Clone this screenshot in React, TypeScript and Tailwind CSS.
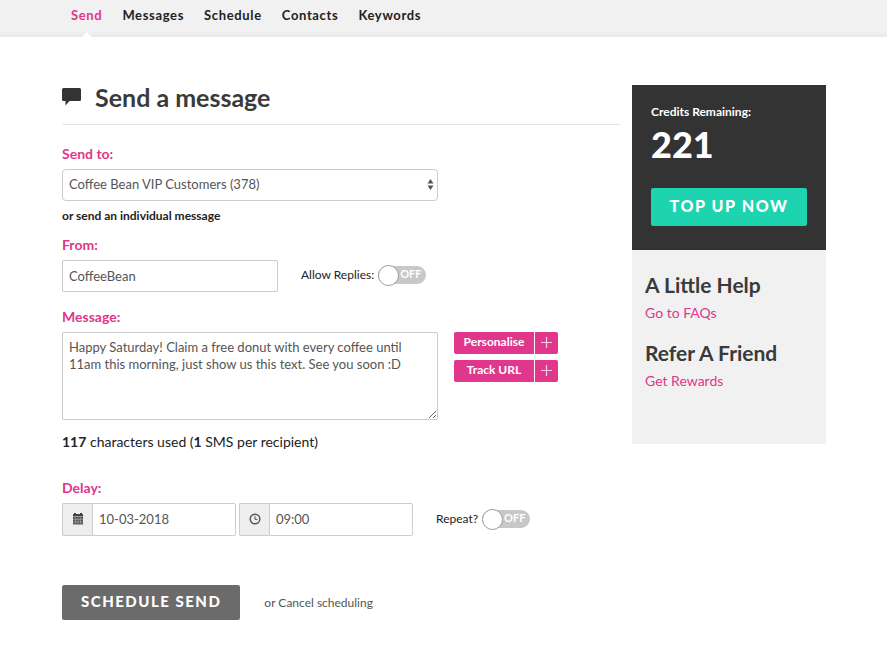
import { useState } from "react"

const NAV = ["Send", "Messages", "Schedule", "Contacts", "Keywords"]

const labelClass = "block pb-1.5 text-sm leading-[18px] font-bold text-[#e0368c]"
const fieldClass = "border border-[#cccccc] rounded-xs bg-white text-[13px] text-[#555555] focus:outline-none focus:border-[#e0368c]"

function Toggle({ id, label }: { id: string; label: string }) {
  const [on, setOn] = useState(false)
  return (
    <div className="flex items-center gap-1 pb-0.5">
      <label htmlFor={id} className="text-xs text-[#222222]">{label}</label>
      <div className="relative flex items-center w-12 h-5">
        <input id={id} type="checkbox" checked={on} onChange={e => setOn(e.target.checked)}
          className="peer appearance-none w-12 h-[18px] rounded-full bg-[#c8c8c8] checked:bg-[#1dd3b0] cursor-pointer" />
        <span className="absolute left-0 top-0 size-[21px] rounded-full bg-white border border-[#999999] pointer-events-none peer-checked:left-7" />
        <span className={`absolute top-0 ${on ? "left-2" : "left-[22px]"} text-[11px] leading-[18px] font-bold text-white pointer-events-none`}>
          {on ? "ON" : "OFF"}
        </span>
      </div>
    </div>
  )
}

function InsertButton({ text }: { text: string }) {
  return (
    <button type="button" className="flex gap-px h-[22px] text-xs font-bold text-white">
      <span className="w-20 h-full pb-0.5 flex items-center justify-center rounded-l-xs bg-[#e0368c]">{text}</span>
      <span className="w-[23px] h-full pb-0.5 flex items-center justify-center rounded-r-xs bg-[#e0368c]">
        <svg width="11" height="11" viewBox="0 0 11 11" stroke="#f8cfe3" strokeWidth="1.2">
          <path d="M5.5 0v11M0 5.5h11" />
        </svg>
      </span>
    </button>
  )
}

function CalendarIcon() {
  return (
    <svg width="12" height="12" viewBox="0 0 12 12">
      <path d="M1 1h1V0h2v1h4V0h2v1h1v2.5H1z" fill="#444" />
      <rect x="1" y="4" width="10" height="7.5" fill="#555" />
      <path d="M1 6.4h10M1 8.9h10M3.5 4.2v7.3M6 4.2v7.3M8.5 4.2v7.3" stroke="#bbb" strokeWidth=".5" />
    </svg>
  )
}

function ClockIcon() {
  return (
    <svg width="12" height="12" viewBox="0 0 12 12" fill="none" stroke="#555">
      <circle cx="6" cy="6" r="4.8" strokeWidth="1.4" />
      <path d="M6 3.2V6.4H8.4" strokeWidth="1" />
    </svg>
  )
}

export default function App() {
  const [message, setMessage] = useState(
    "Happy Saturday! Claim a free donut with every coffee until 11am this morning, just show us this text. See you soon :D"
  )

  return (
    <div className="min-h-screen bg-white font-[Lato,'Open_Sans',sans-serif] text-[#222222]">
      <header className="bg-[#f1f1f1] bg-linear-to-b from-[#f1f1f1] from-85% to-[#e8e8e8]">
        <nav className="flex gap-5 h-[37px] px-[71px]">
          {NAV.map((item, i) => (
            <a key={item} href="#"
              className={`relative pt-1.5 text-[13px] leading-[18px] font-bold tracking-wider ${i === 0 ? "text-[#e0368c]" : "text-[#222222]"}`}>
              {item}
              {i === 0 && (
                <svg className="absolute bottom-0 left-1/2 -translate-x-1/2" width="10" height="5" viewBox="0 0 10 5">
                  <path d="M0 5L5 0l5 5z" fill="#fff" />
                </svg>
              )}
            </a>
          ))}
        </nav>
      </header>

      <div className="flex items-start gap-3 pl-[62px] pr-[61px] pt-12 pb-12">
        <main className="flex-1 min-w-0">
          <div className="flex items-center gap-3.5 pb-[15px] border-b border-[#e5e5e5]">
            <svg width="19" height="18" viewBox="0 0 19 18" fill="#333">
              <path d="M1.5 0h16A1.5 1.5 0 0 1 19 1.5v10a1.5 1.5 0 0 1-1.5 1.5H7.5L3.500 17.500V13h-2A1.500 1.500 0 0 1 0 11.500v-10A1.500 1.500 0 0 1 1.500 0z" />
            </svg>
            <h1 className="text-[25px] leading-6 font-bold text-[#3a3a3a]">Send a message</h1>
          </div>

          <form className="mt-5" onSubmit={e => e.preventDefault()}>
            <label htmlFor="sendTo" className={labelClass}>Send to:</label>
            <div className="relative max-w-[376px]">
              <select id="sendTo" className="appearance-none w-full h-8 px-1.5 border border-[#cccccc] rounded-sm bg-white text-[13px] text-[#555555]">
                <option>Coffee Bean VIP Customers (378)</option>
              </select>
              <svg className="absolute right-1 top-2.5 pointer-events-none" width="7" height="11" viewBox="0 0 7 11" fill="#555">
                <path d="M3.500 0L6.500 4.500h-6zM3.500 11L.5 6.500h6z" />
              </svg>
            </div>
            <a href="#" className="block mt-[5px] text-xs leading-5 font-bold">or send an individual message</a>

            <label htmlFor="from" className={`${labelClass} mt-2.5`}>From:</label>
            <div className="flex items-center gap-[23px]">
              <input id="from" type="text" defaultValue="CoffeeBean" className={`${fieldClass} w-[216px] h-8 px-1.5`} />
              <Toggle id="replies" label="Allow Replies:" />
            </div>

            <label htmlFor="message" className={`${labelClass} mt-4`}>Message:</label>
            <div className="flex items-start gap-4">
              <textarea id="message" value={message} onChange={e => setMessage(e.target.value)}
                className={`${fieldClass} block w-[376px] h-[88px] px-1.5 py-1.5 leading-[17px]`} />
              <div className="flex flex-col gap-1.5">
                <InsertButton text="Personalise" />
                <InsertButton text="Track URL" />
              </div>
            </div>
            <p className="mt-3 text-sm leading-5">
              <b>{message.length}</b> characters used (<b>1</b> SMS per recipient)
            </p>

            <label htmlFor="date" className={`${labelClass} mt-[27px]`}>Delay:</label>
            <div className="flex items-center">
              <div className="flex w-[174px] h-[33px] mr-[3px]">
                <span className="w-[30px] pb-0.5 flex items-center justify-center border border-r-0 border-[#cccccc] rounded-l-xs bg-[#eeeeee]">
                  <CalendarIcon />
                </span>
                <input id="date" type="text" defaultValue="10-03-2018" className={`${fieldClass} flex-1 min-w-0 px-1.5 rounded-l-none`} />
              </div>
              <div className="flex w-[174px] h-[33px] mr-[23px]">
                <span className="w-[30px] pb-0.5 flex items-center justify-center border border-r-0 border-[#cccccc] rounded-l-xs bg-[#eeeeee]">
                  <ClockIcon />
                </span>
                <input id="time" type="text" aria-label="Time" defaultValue="09:00" className={`${fieldClass} flex-1 min-w-0 px-1.5 rounded-l-none`} />
              </div>
              <Toggle id="repeat" label="Repeat?" />
            </div>

            <div className="flex items-center gap-6 mt-[49px]">
              <button type="submit" className="h-[35px] px-[19px] pb-0.5 rounded-xs bg-[#6b6b6b] text-[15px] font-black tracking-widest text-white">
                SCHEDULE SEND
              </button>
              <span className="text-xs text-[#555555]">or <a href="#">Cancel scheduling</a></span>
            </div>
          </form>
        </main>

        <aside className="w-[194px] shrink-0">
          <div className="px-[19px] pt-[17px] pb-6 bg-[#333333] text-white">
            <p className="text-xs leading-5 font-bold">Credits Remaining:</p>
            <p className="mt-1 text-4xl leading-9 font-black">221</p>
            <button type="button" className="w-full h-[38px] mt-[26px] pb-0.5 rounded-xs bg-[#1dd3b0] text-base font-black tracking-widest">
              TOP UP NOW
            </button>
          </div>
          <div className="px-[13px] pt-[23px] pb-[53px] bg-[#f1f1f1]">
            <h2 className="text-[21px] leading-6 font-bold text-[#3a3a3a]">A Little Help</h2>
            <a href="#" className="block mt-1.5 text-sm leading-5 text-[#e0368c]">Go to FAQs</a>
            <h2 className="mt-[18px] text-[21px] leading-6 font-bold text-[#3a3a3a]">Refer A Friend</h2>
            <a href="#" className="block mt-1.5 text-sm leading-5 text-[#e0368c]">Get Rewards</a>
          </div>
        </aside>
      </div>
    </div>
  )
}
